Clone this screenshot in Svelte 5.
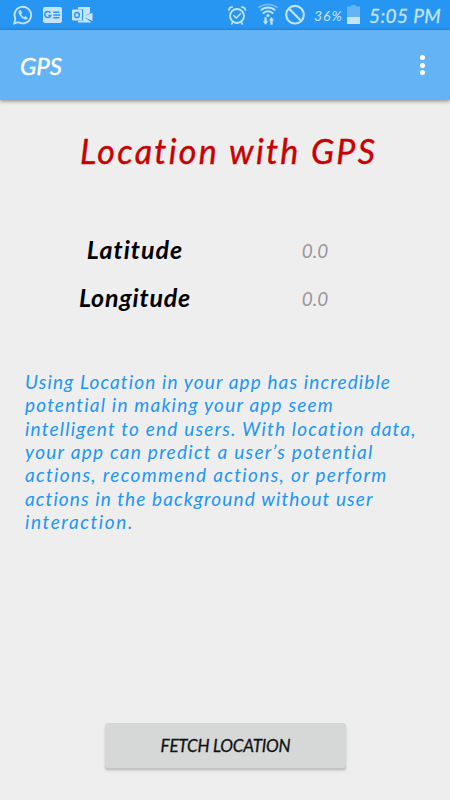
<script lang="ts">
	let latitude = '0.0';
	let longitude = '0.0';

	const description = [
		{ text: 'Using Location in your app has incredible', spacing: 1.12 },
		{ text: 'potential in making your app seem', spacing: 1.2 },
		{ text: 'intelligent to end users. With location data,', spacing: 1.2 },
		{ text: 'your app can predict a user’s potential', spacing: 1.27 },
		{ text: 'actions, recommend actions, or perform', spacing: 1.34 },
		{ text: 'actions in the background without user', spacing: 1.1 },
		{ text: 'interaction.', spacing: 1.6 }
	];
</script>

<div class="screen">
	<div class="status-bar">
		<svg class="notifications" width="100" height="30" viewBox="0 0 100 30">
			<g fill="none" stroke="currentColor">
				<path d="M14.2 23.4 L15.4 18.9 A8.3 8.3 0 1 1 18.5 22.2 Z" stroke-width="1.8" />
				<path d="M19.6 10.6 C18 12.5 19.5 15 21.4 16.9 C23.7 19 26 20 27.5 18.2 L25.3 16.5 L23.9 17.5 C22.6 16.9 21.4 15.7 20.8 14.3 L21.7 13.2 L20.7 10.6 Z" fill="currentColor" stroke-width=".7" />
			</g>
			<rect x="43" y="7" width="19" height="16" rx="2" fill="currentColor" />
			<g fill="none" stroke="#2796f3" stroke-width="1.5">
				<path d="M50.4 12.7 A3.1 3.1 0 1 0 50.8 15.5 H48.2" />
				<path d="M53.3 12.2 H59.4 M53.3 15 H60.2 M53.3 17.8 H59.4" />
			</g>
			<path d="M78 7 H90 V13 L84.5 16 L92.5 12.7 V21 L84.5 17.3 L91.5 22.4 H78 V20.5 H83 V9.3 H78 Z" fill="currentColor" />
			<rect x="72" y="9.4" width="10" height="11" rx="1" fill="currentColor" />
			<ellipse cx="77" cy="15" rx="2.3" ry="2.6" fill="none" stroke="#2796f3" stroke-width="1.5" />
		</svg>

		<div class="system">
			<svg width="84" height="30" viewBox="230 0 84 30">
				<g fill="none" stroke="currentColor" stroke-linecap="round">
					<circle cx="237" cy="16" r="7" stroke-width="1.9" />
					<path d="M228.8 10.2 C229 8.2 230.5 7.1 232.3 7 M241.8 7 C243.8 7.1 245.2 8.3 245.4 10.2 M232.6 22.4 L231.6 24 M241.4 22.4 L242.4 24" stroke-width="1.6" />
					<path d="M233.8 15.7 L236.3 18 L240.5 13.8" stroke-width="1.5" />
					<path d="M258.8 7.3 Q268 1.4 277.2 7.3" stroke-width="1.8" opacity=".45" />
					<path d="M261.3 9.8 Q268 5.2 274.7 9.8 M263.4 13 Q268 9.6 272.6 13" stroke-width="1.9" />
				</g>
				<circle cx="268" cy="15.5" r="1.6" fill="currentColor" />
				<path d="M264.4 17.2 H266.7 V21.3 H268.2 L265.5 24.8 L262.8 21.3 H264.4 Z M270.4 24.8 V20.5 H268.8 L271.4 17 L274.1 20.5 H272.6 V24.8 Z" fill="currentColor" />
				<g fill="none" stroke="currentColor" stroke-width="2.1">
					<circle cx="295" cy="14.7" r="8.8" />
					<path d="M288.9 8.6 L301.1 20.8" />
				</g>
			</svg>
			<span class="percent">36%</span>
			<svg class="battery" width="13" height="20" viewBox="0 0 13 20">
				<path d="M0 1.4 H4.3 V0 H9 V1.4 H13 V12 H0 Z" fill="#64b4f5" />
				<path d="M0 12 H13 V19 H0 Z" fill="currentColor" />
			</svg>
			<span class="clock">5:05 PM</span>
		</div>
	</div>

	<header class="app-bar">
		<span class="app-title">GPS</span>
		<button class="overflow" aria-label="More options">
			<i></i><i></i><i></i>
		</button>
	</header>

	<main>
		<h1>Location with GPS</h1>

		<div class="coordinates">
			<span class="label latitude">Latitude</span>
			<span class="value">{latitude}</span>
			<span class="label longitude">Longitude</span>
			<span class="value">{longitude}</span>
		</div>

		<p class="description">
			{#each description as line}
				<span style:letter-spacing="{line.spacing}px">{line.text}</span>
			{/each}
		</p>

		<button class="fetch">FETCH LOCATION</button>
	</main>
</div>

<style>
	:global(body) {
		margin: 0;
		background: #eee;
	}

	.screen {
		display: flex;
		flex-direction: column;
		width: 450px;
		height: 800px;
		overflow: hidden;
		background: #eee;
		font-family: 'Choco Cooky', Lato, sans-serif;
		font-style: italic;
		white-space: nowrap;
	}

	button {
		border: 0;
		font: inherit;
	}

	.status-bar {
		display: flex;
		justify-content: space-between;
		height: 30px;
		background: #2796f3;
		color: #c6e3fc;
	}

	.system {
		display: flex;
		align-items: center;
		padding-right: 9px;
	}

	.system > svg:first-child {
		overflow: visible;
	}

	.percent {
		width: 33px;
		font-size: 14px;
		letter-spacing: 0.9px;
	}

	.battery {
		margin-right: 9px;
	}

	.clock {
		width: 72px;
		font-size: 19px;
		letter-spacing: 0.4px;
		-webkit-text-stroke: 0.3px;
	}

	.app-bar {
		display: flex;
		align-items: center;
		justify-content: space-between;
		height: 70px;
		padding: 0 25px 0 20px;
		background: #64b4f5;
		color: #fff;
		box-shadow: 0 1px 4px rgba(0, 0, 0, 0.45);
	}

	.app-title {
		font-size: 24px;
		-webkit-text-stroke: 0.4px;
	}

	.overflow {
		display: flex;
		flex-direction: column;
		gap: 2.5px;
		padding: 0;
		background: none;
	}

	.overflow i {
		width: 5px;
		height: 5px;
		border-radius: 50%;
		background: #fff;
	}

	main {
		display: flex;
		flex: 1;
		flex-direction: column;
	}

	h1 {
		margin: 27px 0 0 80px;
		color: #c90000;
		font-size: 34px;
		font-weight: 400;
		line-height: 48px;
		letter-spacing: 2.3px;
		-webkit-text-stroke: 0.4px;
	}

	.coordinates {
		display: grid;
		grid-template-columns: 270px 90px;
		grid-auto-rows: 48px;
		align-items: center;
		justify-items: center;
		margin-top: 50px;
	}

	.label {
		color: #000;
		font-size: 25px;
		font-weight: 700;
	}

	.latitude {
		letter-spacing: 1px;
	}

	.longitude {
		letter-spacing: 0.8px;
	}

	.value {
		padding-top: 2px;
		color: #999;
		font-size: 19px;
	}

	.description {
		display: flex;
		flex-direction: column;
		align-items: flex-start;
		margin: 49px 0 0 25px;
		color: #2196f3;
		font-size: 19px;
		line-height: 23.35px;
	}

	.fetch {
		width: 241px;
		height: 45px;
		margin: auto auto 32px 105px;
		border-radius: 3px;
		background: #d6d8d7;
		color: #111;
		font-size: 17px;
		letter-spacing: -0.2px;
		-webkit-text-stroke: 0.3px;
		box-shadow: 0 2px 1px #c3c4c4, 0 3px 3px rgba(0, 0, 0, 0.12);
	}
</style>
